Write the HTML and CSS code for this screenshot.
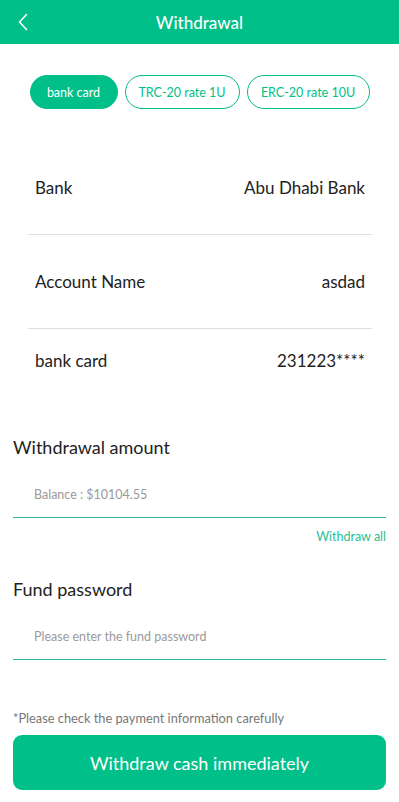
FILE: index.html
```html
<!DOCTYPE html>
<html lang="en">
<head>
  <meta charset="UTF-8">
  <title>Withdrawal</title>
  <link rel="stylesheet" href="styles.css">
</head>
<body>

  <div class="nav-bar">
    <span class="nav-back">
      <svg width="10" height="18" viewBox="0 0 10 18"><path d="M8.5 1.5 L1.5 9 L8.5 16.5" fill="none" stroke="#fff" stroke-width="1.6" stroke-linecap="round" stroke-linejoin="round"/></svg>
    </span>
    <h1 class="nav-title">Withdrawal</h1>
  </div>

  <div class="tabs">
    <button class="tab active">bank card</button>
    <button class="tab">TRC-20 rate 1U</button>
    <button class="tab">ERC-20 rate 10U</button>
  </div>

  <div class="card-info">
    <div class="info-row">
      <span>Bank</span>
      <span>Abu Dhabi Bank</span>
    </div>
    <div class="info-row">
      <span>Account Name</span>
      <span>asdad</span>
    </div>
    <div class="info-row last">
      <span>bank card</span>
      <span>231223****</span>
    </div>
  </div>

  <div class="form-group">
    <p class="form-label">Withdrawal amount</p>
    <input class="form-input" type="text" placeholder="Balance : $10104.55">
    <div class="withdraw-all">Withdraw all</div>
  </div>

  <div class="form-group">
    <p class="form-label">Fund password</p>
    <input class="form-input" type="password" placeholder="Please enter the fund password">
  </div>

  <p class="tip">*Please check the payment information carefully</p>
  <button class="submit-btn">Withdraw cash immediately</button>

</body>
</html>
```

FILE: styles.css
```css
body {
  margin: 0;
  font-family: Lato, "Noto Sans", sans-serif;
  background-color: #fff;
  color: #222;
}
.nav-bar {
  height: 44px;
  background-color: #00bf88;
  display: flex;
  align-items: center;
  justify-content: center;
  position: relative;
}
.nav-back {
  position: absolute;
  left: 18px;
  top: 13px;
  display: flex;
}
.nav-title {
  margin: 0;
  font-size: 17px;
  font-weight: 500;
  color: #fff;
}
.tabs {
  display: flex;
  justify-content: center;
  gap: 7px;
  padding: 31px 0 0;
}
.tab {
  height: 34px;
  padding: 0;
  border-radius: 17px;
  border: 1px solid #00bf88;
  background-color: #fff;
  color: #00bf88;
  font-family: inherit;
  font-size: 12.5px;
}
.tab:nth-child(1) { width: 88px; }
.tab:nth-child(2) { width: 115px; }
.tab:nth-child(3) { width: 123px; }
.tab.active {
  background-color: #00bf88;
  color: #fff;
}
.card-info {
  margin: 32px 27px 0 28px;
}
.info-row {
  display: flex;
  justify-content: space-between;
  align-items: center;
  height: 93px;
  padding: 0 7px;
  border-bottom: 1px solid #dcdde6;
  font-size: 17px;
}
.info-row.last {
  height: 62px;
  border-bottom: none;
}
.form-group {
  margin: 0 13px;
}
.form-label {
  margin: 0;
  padding-top: 44px;
  font-size: 18px;
  line-height: 24px;
}
.form-input {
  display: block;
  width: 100%;
  box-sizing: border-box;
  height: 47px;
  margin-top: 12px;
  padding: 0 21px;
  border: none;
  border-bottom: 1px solid #2cb59c;
  outline: none;
  font-family: inherit;
  font-size: 12.5px;
}
.form-input::placeholder {
  color: #9a9a9a;
}
.withdraw-all {
  text-align: right;
  margin-top: 11px;
  margin-bottom: -11px;
  font-size: 12.5px;
  color: #2cbf96;
}
.tip {
  margin: 50px 13px 0;
  font-size: 12.8px;
  color: #777;
}
.submit-btn {
  display: block;
  width: 373px;
  height: 55px;
  margin: 9px 13px 0;
  border: none;
  border-radius: 9px;
  background-color: #00bf88;
  color: #fff;
  font-family: inherit;
  font-size: 18px;
}
```
